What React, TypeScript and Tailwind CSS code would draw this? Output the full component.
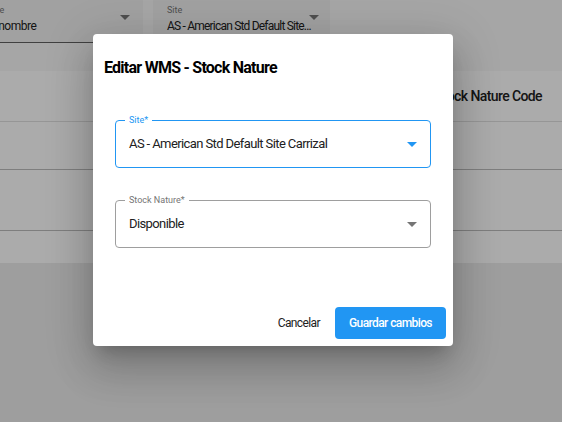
import React from 'react';

function ArrowDrop({ className }: { className?: string }) {
  return (
    <svg viewBox="0 0 24 24" className={className} fill="currentColor" width={24} height={24}>
      <path d="M7 10l5 5 5-5z" />
    </svg>
  );
}

function OutlinedSelect({
  label,
  value,
  focused = false,
}: {
  label: string;
  value: string;
  focused?: boolean;
}) {
  return (
    <div
      className={
        'relative flex h-[48px] items-center justify-between rounded-[4px] border pl-[13px] pr-[6px] ' +
        (focused ? 'border-[#2196f3]' : 'border-[#9e9e9e]')
      }
    >
      <span
        className={
          'absolute -top-[7px] left-[9px] bg-white px-[4px] text-[9px] leading-[12px] ' +
          (focused ? 'text-[#2196f3]' : 'text-[#757575]')
        }
      >
        {label}
      </span>
      <span className="text-[13px] tracking-[-0.6px] text-[#212121]">{value}</span>
      <ArrowDrop className={focused ? 'text-[#2196f3]' : 'text-[#757575]'} />
    </div>
  );
}

export default function App() {
  return (
    <div className="relative h-[422px] w-[562px] overflow-hidden bg-[#ececec] font-['Roboto',sans-serif]">
      {/* Background page */}
      <div className="flex flex-col">
        <div className="flex h-[43px] bg-[#f8f8f8]">
          <div className="flex w-[143px] flex-col overflow-hidden border-b border-[#606060] bg-[#f0f0f0]">
            <div className="flex items-start justify-between pr-[6px]">
              <div className="flex flex-col whitespace-nowrap">
                <span className="-ml-[28px] mt-[4px] text-[9px] leading-[12px] text-[#757575]">Nombre</span>
                <span className="-ml-[48px] mt-[2px] text-[12px] leading-[16px] tracking-[-0.5px] text-[#212121]">
                  Código o nombre
                </span>
              </div>
              <ArrowDrop className="mt-[5px] text-[#757575]" />
            </div>
          </div>
          <div className="ml-[10px] flex w-[177px] items-start bg-[#f0f0f0] pl-[14px]">
            <div className="flex flex-col whitespace-nowrap">
              <span className="mt-[4px] text-[9px] leading-[12px] text-[#757575]">Site</span>
              <span className="mt-[2px] text-[12px] leading-[16px] tracking-[-0.8px] text-[#212121]">
                AS - American Std Default Site...
              </span>
            </div>
            <ArrowDrop className="-ml-[9px] mt-[5px] text-[#757575]" />
          </div>
        </div>
        <div className="h-[28px] bg-[#f8f8f8]" />
        <div className="flex h-[51px] items-center justify-end border-b border-[#e0e0e0] bg-white pr-[20px]">
          <span className="text-[14px] font-medium tracking-[-0.6px] text-[#212121]">Stock Nature Code</span>
        </div>
        <div className="h-[48px] border-b border-[#bdbdbd] bg-white" />
        <div className="h-[61px] border-b border-[#bdbdbd] bg-white" />
        <div className="h-[32px] bg-white" />
      </div>

      {/* Backdrop */}
      <div className="absolute inset-0 bg-black/[0.33]" />

      {/* Dialog */}
      <div className="absolute left-[93px] top-[34px] flex h-[312px] w-[360px] flex-col rounded-[4px] bg-white shadow-[0_11px_15px_-7px_rgba(0,0,0,0.2),0_24px_38px_3px_rgba(0,0,0,0.14),0_9px_46px_8px_rgba(0,0,0,0.12)]">
        <h2 className="ml-[11px] mt-[22px] text-[16px] font-bold leading-[24px] tracking-[-0.75px] text-[#000000]">
          Editar WMS - Stock Nature
        </h2>
        <div className="mt-[40px] flex flex-col gap-[32px] px-[22px]">
          <OutlinedSelect label="Site*" value="AS - American Std Default Site Carrizal" focused />
          <OutlinedSelect label="Stock Nature*" value="Disponible" />
        </div>
        <div className="mt-auto mb-[7px] flex items-center justify-end gap-[15px] pr-[7px]">
          <button className="h-[32px] text-[12px] tracking-[-0.6px] text-[#212121]">Cancelar</button>
          <button className="h-[32px] w-[111px] rounded-[4px] bg-[#2196f3] text-[12px] font-medium tracking-[-0.6px] text-white">
            Guardar cambios
          </button>
        </div>
      </div>
    </div>
  );
}
